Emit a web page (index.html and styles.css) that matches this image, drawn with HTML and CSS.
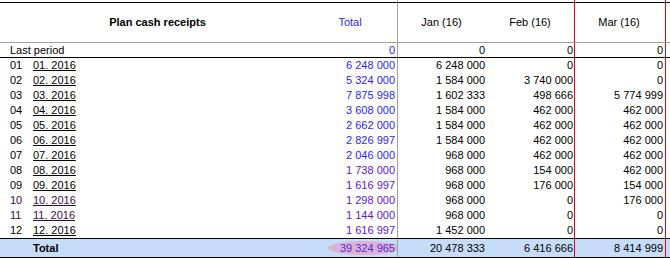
FILE: index.html
```html
<!DOCTYPE html>
<html lang="en">
<head>
    <meta charset="UTF-8">
    <title>Plan cash receipts</title>
    <link rel="stylesheet" href="styles.css">
</head>
<body>
    <div class="grid">
        <div class="row spacer">
            <div class="c wide"></div><div class="c total"></div><div class="c jan"></div><div class="c feb"></div><div class="c mar"></div><div class="c rest"></div>
        </div>
        <div class="row head">
            <div class="c wide title">Plan cash receipts</div>
            <div class="c total center">Total</div>
            <div class="c jan center">Jan (16)</div>
            <div class="c feb center">Feb (16)</div>
            <div class="c mar center">Mar (16)</div>
            <div class="c rest"></div>
        </div>
        <div class="row last">
            <div class="c wide lp">Last period</div>
            <div class="c total num">0</div>
            <div class="c jan num">0</div>
            <div class="c feb num">0</div>
            <div class="c mar num">0</div>
            <div class="c rest"></div>
        </div>
        <div id="body"></div>
        <div class="row sum">
            <div class="c wide sum-label">Total</div>
            <div class="c total num"><span class="hl">39 324 965</span></div>
            <div class="c jan num">20 478 333</div>
            <div class="c feb num">6 416 666</div>
            <div class="c mar num">8 414 999</div>
            <div class="c rest"></div>
        </div>
    </div>

    <script>
        const rows = [
            ['6 248 000', '6 248 000', '0', '0'],
            ['5 324 000', '1 584 000', '3 740 000', '0'],
            ['7 875 998', '1 602 333', '498 666', '5 774 999'],
            ['3 608 000', '1 584 000', '462 000', '462 000'],
            ['2 662 000', '1 584 000', '462 000', '462 000'],
            ['2 826 997', '1 584 000', '462 000', '462 000'],
            ['2 046 000', '968 000', '462 000', '462 000'],
            ['1 738 000', '968 000', '154 000', '462 000'],
            ['1 616 997', '968 000', '176 000', '154 000'],
            ['1 298 000', '968 000', '0', '176 000'],
            ['1 144 000', '968 000', '0', '0'],
            ['1 616 997', '1 452 000', '0', '0']
        ];
        const body = document.getElementById('body');
        rows.forEach((r, i) => {
            const n = String(i + 1).padStart(2, '0');
            const row = document.createElement('div');
            row.className = 'row data' + (i >= 7 ? ' late' : '') + (i === 9 || i === 10 ? ' mark' : '');
            if (i === rows.length - 1) row.className += ' end';
            row.innerHTML = `
                <div class="c idx">${n}</div>
                <div class="c lbl"><u>${n}. 2016</u></div>
                <div class="c total num">${r[0]}</div>
                <div class="c jan num">${r[1]}</div>
                <div class="c feb num">${r[2]}</div>
                <div class="c mar num">${r[3]}</div>
                <div class="c rest"></div>
            `;
            body.appendChild(row);
        });
    </script>
</body>
</html>
```

FILE: styles.css
```css
body {
    margin: 0;
    font-family: "Liberation Sans", Arial, sans-serif;
    font-size: 11px;
    color: #000;
    background: #fff;
}
.grid {
    width: 670px;
    height: 258px;
    overflow: hidden;
}
.row {
    display: grid;
    grid-template-columns: 30px 275px 93px 89px 87px 92px 4px;
    box-sizing: border-box;
}
.c {
    box-sizing: border-box;
    white-space: nowrap;
    overflow: hidden;
}
.wide {
    grid-column: 1 / span 2;
}
.total {
    border-right: 1px solid #a0a0a0;
    padding-right: 2px;
    color: #1f1fff;
}
.jan {
    padding-right: 2px;
}
.feb {
    padding-right: 1px;
}
.mar {
    box-shadow: inset 1px 0 0 #f00000, inset -1px 0 0 #f00000;
    padding: 0 3px 0 1px;
}
.num {
    text-align: right;
}
.center {
    text-align: center;
}
.spacer {
    height: 2px;
}
.head {
    border-top: 1px solid #000;
    border-bottom: 1px solid #a0a0a0;
    line-height: 39px;
}
.title {
    font-weight: bold;
    text-align: center;
    padding-left: 10px;
}
.head .total {
    color: #2a2aff;
}
.last {
    border-bottom: 1px solid #000;
    line-height: 14px;
}
.lp {
    padding-left: 10px;
}
.data {
    line-height: 15px;
}
.data.end {
    border-bottom: 1px solid #000;
}
.idx {
    padding-left: 10px;
}
.lbl {
    padding-left: 3px;
}
.late .total {
    color: #5a14e8;
}
.mark .idx,
.mark .lbl {
    color: #3c0a48;
}
.sum {
    background: #c6dcf8;
    border-bottom: 1px solid #000;
    line-height: 18px;
}
.sum-label {
    font-weight: bold;
    padding-left: 33px;
}
.sum .total {
    color: #5a2ccc;
    position: relative;
}
.hl {
    position: relative;
    z-index: 1;
}
.sum .total::before {
    content: "";
    position: absolute;
    left: 23px;
    top: 2px;
    width: 72px;
    height: 14px;
    border-radius: 50%;
    background: #dbb2da;
}
```
